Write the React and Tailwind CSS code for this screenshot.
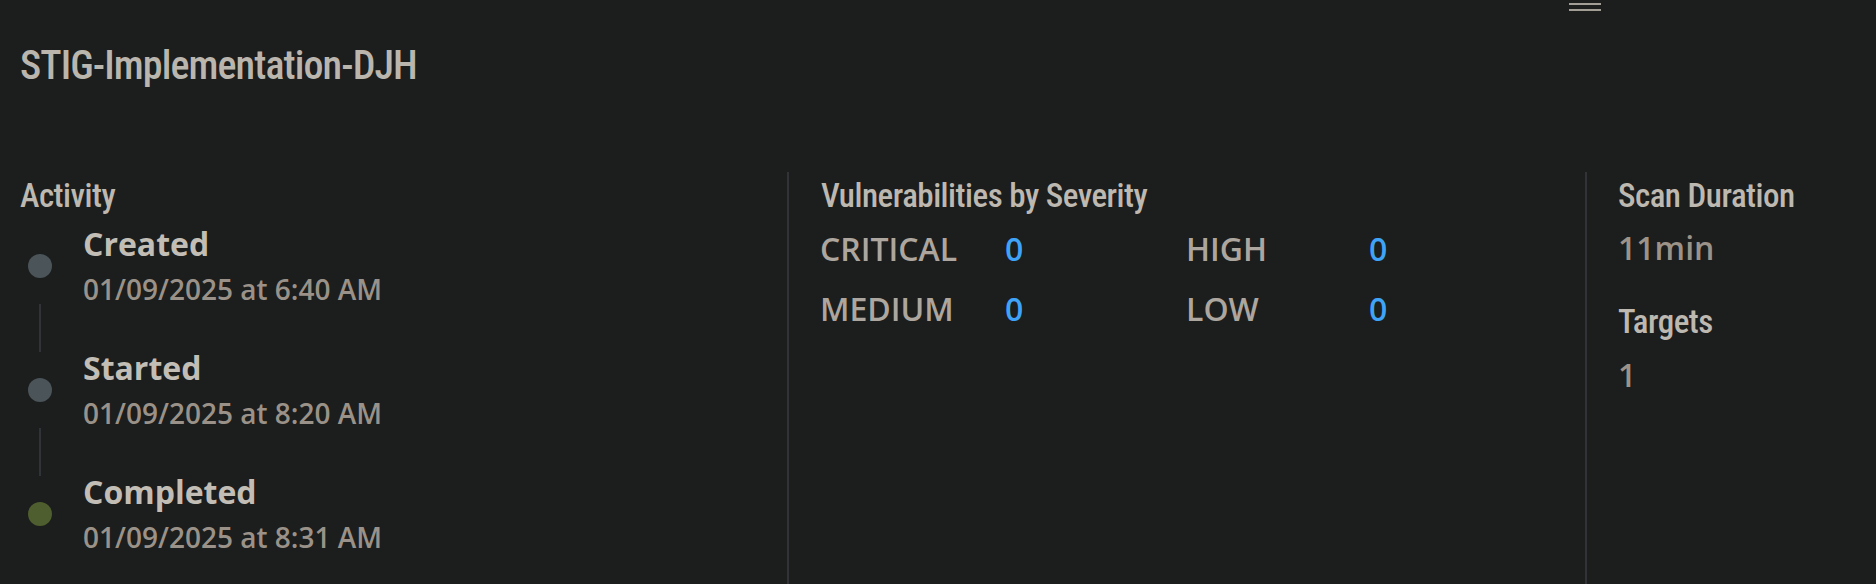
import React from 'react';

const events = [
  { label: 'Created', time: '01/09/2025 at 6:40 AM', dot: 'bg-[#4a5459]' },
  { label: 'Started', time: '01/09/2025 at 8:20 AM', dot: 'bg-[#4a5459]' },
  { label: 'Completed', time: '01/09/2025 at 8:31 AM', dot: 'bg-[#4f5e2e]' },
];

const severities = [
  { label: 'CRITICAL', count: 0 },
  { label: 'HIGH', count: 0 },
  { label: 'MEDIUM', count: 0 },
  { label: 'LOW', count: 0 },
];

function Heading({ children, className = '' }) {
  return (
    <h2
      className={`font-['Roboto_Condensed',Roboto,sans-serif] font-stretch-condensed font-medium text-[33px] leading-[40px] tracking-[-0.5px] text-[#bdb8b0] ${className}`}
    >
      {children}
    </h2>
  );
}

export default function App() {
  return (
    <div className="relative h-[584px] w-full overflow-hidden bg-[#1c1d1d] font-['Open_Sans',sans-serif]">
      {/* menu handle */}
      <div className="absolute left-[1569px] top-[3px] flex w-[32px] flex-col gap-[4px]">
        <span className="h-[2px] bg-[#a39e95]" />
        <span className="h-[2px] bg-[#a39e95]" />
      </div>

      <h1 className="pl-[20px] pt-[42px] font-['Roboto_Condensed',Roboto,sans-serif] font-stretch-condensed font-medium text-[40px] leading-[48px] tracking-[-0.9px] text-[#bab5ad]">
        STIG-Implementation-DJH
      </h1>

      <div className="mt-[82px] flex h-[412px]">
        {/* Activity */}
        <section className="w-[787px] shrink-0 pl-[20px] pt-[4px]">
          <Heading>Activity</Heading>
          <div className="mt-[12px] flex flex-col">
            {events.map((e, i) => (
              <React.Fragment key={e.label}>
                {i > 0 && <div className="ml-[19px] h-[48px] w-[2px] bg-[#303338]" />}
                <div className="flex h-[76px] items-center">
                  <span className={`ml-[8px] h-[24px] w-[24px] shrink-0 rounded-full ${e.dot}`} />
                  <div className="ml-[31px] flex flex-col">
                    <span className="text-[32px] font-bold leading-[36px] text-[#c2bdb5]">{e.label}</span>
                    <span className="mt-[9px] text-[28px] font-semibold leading-[36px] text-[#9a9288]">{e.time}</span>
                  </div>
                </div>
              </React.Fragment>
            ))}
          </div>
        </section>

        {/* Vulnerabilities */}
        <section className="w-[798px] shrink-0 border-l-2 border-[#313337] pl-[32px] pt-[4px]">
          <Heading>Vulnerabilities by Severity</Heading>
          <div className="mt-[11px] grid grid-cols-[184px_182px_182px_auto] gap-y-[16px] text-[32px] leading-[44px]">
            {severities.map((s) => (
              <React.Fragment key={s.label}>
                <span className="-ml-[1px] font-semibold text-[#aca69e]">{s.label}</span>
                <span className="font-semibold text-[#3fa4f7]">{s.count}</span>
              </React.Fragment>
            ))}
          </div>
        </section>

        {/* Summary */}
        <section className="flex-1 border-l-2 border-[#313337] pl-[31px] pt-[4px]">
          <Heading>Scan Duration</Heading>
          <div className="mt-[10px] text-[32px] font-semibold leading-[44px] text-[#9b9388]">11min</div>
          <Heading className="mt-[32px]">Targets</Heading>
          <div className="mt-[11px] text-[32px] font-semibold leading-[44px] text-[#9b9388]">1</div>
        </section>
      </div>
    </div>
  );
}
